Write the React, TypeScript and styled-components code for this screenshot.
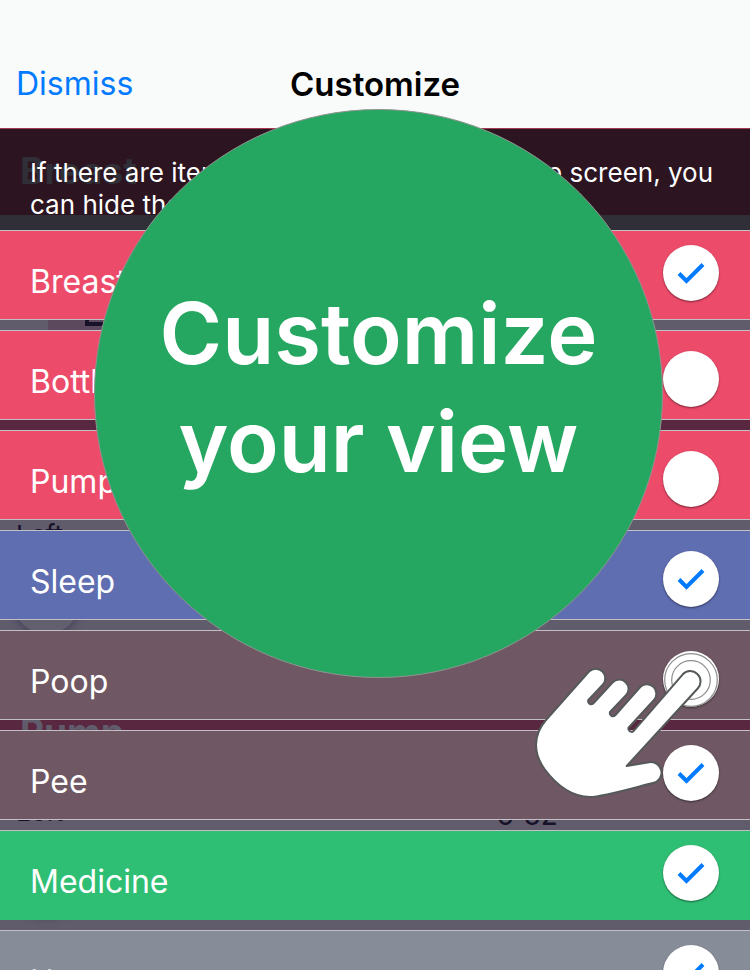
import React from "react";
import styled, { createGlobalStyle, css } from "styled-components";

const GlobalStyle = createGlobalStyle`
  *, *::before, *::after { box-sizing: border-box; }
  html, body { margin: 0; }
  html { height: 100%; overflow: hidden; }
  body {
    height: 100%;
    overflow: hidden;
    background: #605c6c;
    color: #fff;
    font-family: Inter, "Liberation Sans", sans-serif;
  }
`;

const Screen = styled.div`
  position: relative;
  height: 100vh;
  overflow: hidden;
`;

const NavBar = styled.header`
  display: grid;
  grid-template-columns: 1fr auto 1fr;
  align-items: center;
  padding: 62px 16px 22px;
  background: #f9fafa;
  border-bottom: 1px solid #a3384f;
`;

const DismissButton = styled.button`
  justify-self: start;
  border: 0;
  padding: 0;
  background: none;
  color: #007aff;
  font: 400 32px/44px Inter, "Liberation Sans", sans-serif;
`;

const Title = styled.h1`
  margin: 0;
  color: #000;
  font-size: 33px;
  font-weight: 600;
  line-height: 44px;
`;

const Content = styled.main`
  position: relative;
`;

const Backdrop = styled.div`
  position: absolute;
  inset: 0;
`;

const DimHeader = styled.div<{ $shaded?: boolean; $height: number }>`
  height: ${(p) => p.$height}px;
  padding: 16px 20px;
  background: ${(p) => (p.$shaded ? "#2c1420" : "#5a2740")};
  color: ${(p) => (p.$shaded ? "#302e37" : "#605c6c")};
  font-size: 37px;
  font-weight: 700;
  line-height: 52px;
`;

const DimPanel = styled.div<{ $height: number; $shaded?: boolean }>`
  height: ${(p) => p.$height}px;
  overflow: hidden;
  background: ${(p) => (p.$shaded ? "#302e37" : "#605c6c")};
`;

const DimTab = styled.div`
  width: 240px;
  height: 100%;
  margin-left: 48px;
  padding: 60px 37px 0;
  background: #5c495d;
`;

const DimBox = styled.div`
  width: 36px;
  height: 36px;
  border: 4px solid #17122a;
`;

const DimRow = styled.div`
  display: grid;
  grid-template-columns: 480px 1fr;
  align-items: start;
  padding: 14px 16px 0;
  color: #17122a;
  font-size: 26px;
  line-height: 32px;
`;

const DimValue = styled.span`
  font-size: 30px;
  line-height: 36px;
`;

const DimKnob = styled.div`
  width: 67px;
  height: 67px;
  margin: 16px 13px 0;
  border-radius: 50%;
  background: #625f6f;
  box-shadow: 0 3px 8px #48445a;
`;

const Intro = styled.p`
  position: relative;
  margin: 0;
  padding: 28px 30px 9px;
  font-size: 26px;
  line-height: 32px;
`;

const List = styled.ul`
  position: relative;
  display: flex;
  flex-direction: column;
  gap: 10px;
  margin: 0;
  padding: 0;
  list-style: none;
`;

const Row = styled.li<{ $color: string; $plainEnd?: boolean }>`
  height: 90px;
  background: ${(p) => p.$color};
  border-top: 1px solid #c3bfc6;
  border-bottom: 1px solid ${(p) => (p.$plainEnd ? p.$color : "#c3bfc6")};
`;

const RowLabel = styled.label<{ $faded?: boolean }>`
  display: flex;
  justify-content: space-between;
  padding: 0 31px 0 30px;
  font-size: 32px;
  line-height: 102px;
  color: ${(p) => (p.$faded ? "#d5d8dc" : "#fff")};
`;

const ToggleSlot = styled.span<{ $low?: boolean }>`
  position: relative;
  display: grid;
  width: 56px;
  height: 56px;
  margin-top: ${(p) => (p.$low ? 20 : 14)}px;
  > * { grid-area: 1 / 1; }
`;

const Toggle = styled.input`
  appearance: none;
  width: 56px;
  height: 56px;
  margin: 0;
  border-radius: 50%;
  background: #fff;
  box-shadow: 0 1px 2px rgba(0, 0, 0, 0.5);
`;

const overlay = css`
  pointer-events: none;
`;

const Mark = styled.svg`
  ${overlay}
  position: relative;
  width: 56px;
  height: 56px;
  fill: none;
  stroke: #007aff;
  stroke-width: 4;
`;

const Hand = styled.svg`
  ${overlay}
  position: absolute;
  z-index: 2;
  top: -11px;
  left: -133px;
  width: 200px;
  height: 170px;
`;

const CalloutLayer = styled.div`
  ${overlay}
  position: absolute;
  top: 109px;
  left: 0;
  right: 0;
  display: flex;
  justify-content: center;
  padding-left: 7px;
`;

const Callout = styled.h2`
  display: flex;
  flex-direction: column;
  justify-content: center;
  width: 569px;
  height: 569px;
  margin: 0;
  padding-bottom: 12px;
  border: 1px solid #8f938f;
  border-radius: 50%;
  background: #26a761;
  text-align: center;
  font-size: 85px;
  font-weight: 600;
  line-height: 108px;
`;

type Item = {
  name: string;
  color: string;
  checked?: boolean;
  low?: boolean;
  plainEnd?: boolean;
  faded?: boolean;
  pressed?: boolean;
};

const items: Item[] = [
  { name: "Breast", color: "#ed4b6a", checked: true },
  { name: "Bottle", color: "#ed4b6a", low: true },
  { name: "Pump", color: "#ed4b6a", low: true },
  { name: "Sleep", color: "#5f6db1", checked: true, low: true },
  { name: "Poop", color: "#6f5863", low: true, pressed: true },
  { name: "Pee", color: "#6f5863", checked: true },
  { name: "Medicine", color: "#2fbf74", checked: true, plainEnd: true },
  { name: "Hunger", color: "#878d98", checked: true, faded: true },
];

const TapHand = () => (
  <Hand viewBox="530 640 200 170" aria-hidden="true">
    <g fill="none" stroke="#8d8d8d" strokeWidth="1.2">
      <circle cx="691" cy="680" r="26.3" />
      <circle cx="691" cy="680" r="19.3" />
    </g>
    <path
      d="M589 671.5L546 720C533 735 533 753 544.500 769C557 786 573 796.500 590 797C603 797 640 786 653 783A10.500 10.500 0 0 0 649 762.300L626.700 766L697.700 688.500A10 10 0 0 0 682.800 674.300L633.500 731.200A3.200 3.200 0 0 1 628.500 727.800L654 700A9.500 9.500 0 0 0 640.700 686.500L615 715.500A3.200 3.200 0 0 1 610 712L626 695.300A9.300 9.300 0 0 0 612.500 682.500L593 703.700A3.200 3.200 0 0 1 588.200 700.200L602.500 685A9.400 9.400 0 0 0 589 671.500Z"
      fill="#fff"
      stroke="#55595a"
      strokeWidth="2"
      strokeLinejoin="round"
    />
  </Hand>
);

export default function App() {
  return (
    <>
      <GlobalStyle />
      <Screen>
        <NavBar>
          <DismissButton type="button">Dismiss</DismissButton>
          <Title>Customize</Title>
        </NavBar>
        <Content>
          <Backdrop aria-hidden="true">
            <DimHeader $shaded $height={86}>Breast</DimHeader>
            <DimPanel $shaded $height={15} />
            <DimPanel $height={185}>
              <DimTab>
                <DimBox />
              </DimTab>
            </DimPanel>
            <DimHeader $height={90} />
            <DimPanel $height={185}>
              <DimRow>
                <span>Left</span>
              </DimRow>
              <DimKnob />
            </DimPanel>
            <DimHeader $height={92}>Pump</DimHeader>
            <DimPanel $height={200}>
              <DimRow>
                <span>Left</span>
                <DimValue>0 oz</DimValue>
              </DimRow>
              <DimKnob />
            </DimPanel>
          </Backdrop>
          <Intro>
            If there are items you don’t use in the home screen, you can hide them here.
          </Intro>
          <List>
            {items.map((item) => (
              <Row key={item.name} $color={item.color} $plainEnd={item.plainEnd}>
                <RowLabel $faded={item.faded}>
                  {item.name}
                  <ToggleSlot $low={item.low}>
                    <Toggle type="checkbox" defaultChecked={item.checked} />
                    {item.checked && (
                      <Mark viewBox="0 0 56 56" aria-hidden="true">
                        <path d="M16 28.500L23.500 36L40 19.500" />
                      </Mark>
                    )}
                    {item.pressed && <TapHand />}
                  </ToggleSlot>
                </RowLabel>
              </Row>
            ))}
          </List>
        </Content>
        <CalloutLayer>
          <Callout>
            <span>Customize</span>
            <span>your view</span>
          </Callout>
        </CalloutLayer>
      </Screen>
    </>
  );
}
